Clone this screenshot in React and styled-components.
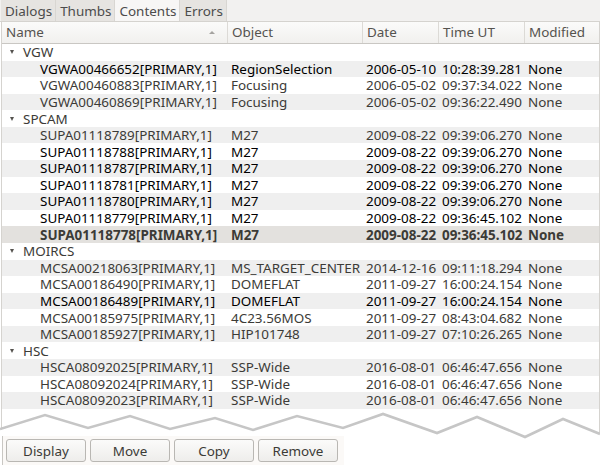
import styled, { createGlobalStyle } from 'styled-components'

const GlobalStyle = createGlobalStyle`
  html, body {
    margin: 0;
    padding: 0;
    background: #fff;
  }
  body {
    font-family: 'Noto Sans', 'Open Sans', sans-serif;
    font-size: 13.45px;
    color: #3c3b37;
  }
`

const Page = styled.div`
  width: 600px;
  height: 470px;
  position: relative;
  overflow: hidden;
  display: flex;
  flex-direction: column;
  background: #fff;
`

const TabBar = styled.div`
  height: 21px;
  display: flex;
  padding-left: 1px;
  background: #f2f1f0;
  border-bottom: 1px solid #d5d3cf;
`

const Tab = styled.div`
  height: 21px;
  padding: 0 3px 0 4px;
  display: flex;
  align-items: center;
  font-size: 13.45px;
  color: #4c4c4c;
  border-right: 1px solid #d8d6d2;
  background: ${(props) => (props.$active ? '#f7f6f5' : '#e6e4e1')};
`

const Panel = styled.div`
  flex: 1;
  display: flex;
  flex-direction: column;
  margin-left: 1px;
  border-left: 1px solid #d5d3cf;
  border-right: 1px solid #d5d3cf;
`

const HeaderRow = styled.div`
  height: 21px;
  display: grid;
  grid-template-columns: 226px 135px 76px 86px 1fr;
  background: linear-gradient(#fbfbfa, #f1f0ee);
  border-bottom: 1px solid #c9c7c3;
`

const HeaderCell = styled.div`
  display: flex;
  align-items: center;
  justify-content: space-between;
  padding: 0 4px 1px;
  font-size: 13.45px;
  color: #55534f;
  border-right: 1px solid #dcdad6;
  &:last-child {
    border-right: none;
  }
`

const SortMark = styled.span`
  width: 0;
  height: 0;
  margin-right: 8px;
  border-left: 3px solid transparent;
  border-right: 3px solid transparent;
  border-bottom: 3px solid #a5a3a0;
`

const Rows = styled.div`
  display: flex;
  flex-direction: column;
`

const Row = styled.div`
  height: 16.58px;
  display: grid;
  grid-template-columns: 226px 135px 76px 86px 1fr;
  align-items: center;
  line-height: 16px;
  white-space: nowrap;
  background: ${(props) =>
    props.$selected ? '#e3e1de' : props.$alt ? '#efefef' : '#fff'};
  color: ${(props) => (props.$current ? '#000' : '#3c3b37')};
  font-weight: ${(props) => (props.$selected ? 700 : 400)};
`

const NameCell = styled.div`
  padding-left: ${(props) => (props.$group ? '8px' : '38px')};
  display: flex;
  align-items: center;
  gap: 9px;
`

const Cell = styled.div`
  padding-left: 3px;
`

const Arrow = styled.span`
  width: 0;
  height: 0;
  border-left: 2.5px solid transparent;
  border-right: 2.5px solid transparent;
  border-top: 4px solid #55534f;
`

const Torn = styled.svg`
  position: absolute;
  left: 0;
  top: 405px;
  display: block;
`

const ButtonBar = styled.div`
  position: absolute;
  left: 2px;
  top: 436px;
  display: flex;
  gap: 4px;
  padding: 3px 6px 3px 3px;
  background: #fbf9f7;
  border-left: 1px solid #c9c7c3;
`

const Button = styled.button`
  width: 80px;
  height: 23px;
  padding: 0;
  font-family: inherit;
  font-size: 13.45px;
  color: #3c3b37;
  border: 1px solid #b9b7b3;
  border-radius: 3px;
  background: linear-gradient(#fbfbfa, #eeedeb);
`

const groups = [
  {
    name: 'VGW',
    rows: [
      ['VGWA00466652[PRIMARY,1]', 'RegionSelection', '2006-05-10', '10:28:39.281', 'c'],
      ['VGWA00460883[PRIMARY,1]', 'Focusing', '2006-05-02', '09:37:34.022'],
      ['VGWA00460869[PRIMARY,1]', 'Focusing', '2006-05-02', '09:36:22.490'],
    ],
  },
  {
    name: 'SPCAM',
    rows: [
      ['SUPA01118789[PRIMARY,1]', 'M27', '2009-08-22', '09:39:06.270'],
      ['SUPA01118788[PRIMARY,1]', 'M27', '2009-08-22', '09:39:06.270', 'c'],
      ['SUPA01118787[PRIMARY,1]', 'M27', '2009-08-22', '09:39:06.270', 'c'],
      ['SUPA01118781[PRIMARY,1]', 'M27', '2009-08-22', '09:39:06.270', 'c'],
      ['SUPA01118780[PRIMARY,1]', 'M27', '2009-08-22', '09:39:06.270', 'c'],
      ['SUPA01118779[PRIMARY,1]', 'M27', '2009-08-22', '09:36:45.102', 'c'],
      ['SUPA01118778[PRIMARY,1]', 'M27', '2009-08-22', '09:36:45.102', 's'],
    ],
  },
  {
    name: 'MOIRCS',
    rows: [
      ['MCSA00218063[PRIMARY,1]', 'MS_TARGET_CENTER', '2014-12-16', '09:11:18.294'],
      ['MCSA00186490[PRIMARY,1]', 'DOMEFLAT', '2011-09-27', '16:00:24.154'],
      ['MCSA00186489[PRIMARY,1]', 'DOMEFLAT', '2011-09-27', '16:00:24.154', 'c'],
      ['MCSA00185975[PRIMARY,1]', '4C23.56MOS', '2011-09-27', '08:43:04.682'],
      ['MCSA00185927[PRIMARY,1]', 'HIP101748', '2011-09-27', '07:10:26.265'],
    ],
  },
  {
    name: 'HSC',
    rows: [
      ['HSCA08092025[PRIMARY,1]', 'SSP-Wide', '2016-08-01', '06:46:47.656'],
      ['HSCA08092024[PRIMARY,1]', 'SSP-Wide', '2016-08-01', '06:46:47.656'],
      ['HSCA08092023[PRIMARY,1]', 'SSP-Wide', '2016-08-01', '06:46:47.656'],
    ],
  },
]

const wave =
  '0,429 45,415 88,428 130,416 170,429 215,418 253,430 297,416 343,428 383,414 437,433 477,417 525,437 563,419 600,434'

const App = () => {
  let index = 0
  return (
    <Page>
      <GlobalStyle />
      <TabBar>
        <Tab>Dialogs</Tab>
        <Tab>Thumbs</Tab>
        <Tab $active>Contents</Tab>
        <Tab>Errors</Tab>
      </TabBar>
      <Panel>
        <HeaderRow>
          <HeaderCell>
            Name
            <SortMark />
          </HeaderCell>
          <HeaderCell>Object</HeaderCell>
          <HeaderCell>Date</HeaderCell>
          <HeaderCell>Time UT</HeaderCell>
          <HeaderCell>Modified</HeaderCell>
        </HeaderRow>
        <Rows>
          {groups.map((group) => {
            const head = (
              <Row key={group.name} $alt={index++ % 2 === 1}>
                <NameCell $group>
                  <Arrow />
                  {group.name}
                </NameCell>
              </Row>
            )
            return [
              head,
              ...group.rows.map(([name, object, date, time, state]) => (
                <Row
                  key={name}
                  $alt={index++ % 2 === 1}
                  $current={state === 'c'}
                  $selected={state === 's'}
                >
                  <NameCell>{name}</NameCell>
                  <Cell>{object}</Cell>
                  <Cell>{date}</Cell>
                  <Cell>{time}</Cell>
                  <Cell>None</Cell>
                </Row>
              )),
            ]
          })}
        </Rows>
      </Panel>
      <Torn width="600" height="65" viewBox="0 405 600 65">
        <polygon points={`${wave} 600,470 0,470`} fill="#fff" />
        <polyline points={wave} fill="none" stroke="#c6c6c6" strokeWidth="2.6" />
      </Torn>
      <ButtonBar>
        <Button>Display</Button>
        <Button>Move</Button>
        <Button>Copy</Button>
        <Button>Remove</Button>
      </ButtonBar>
    </Page>
  )
}

export default App
